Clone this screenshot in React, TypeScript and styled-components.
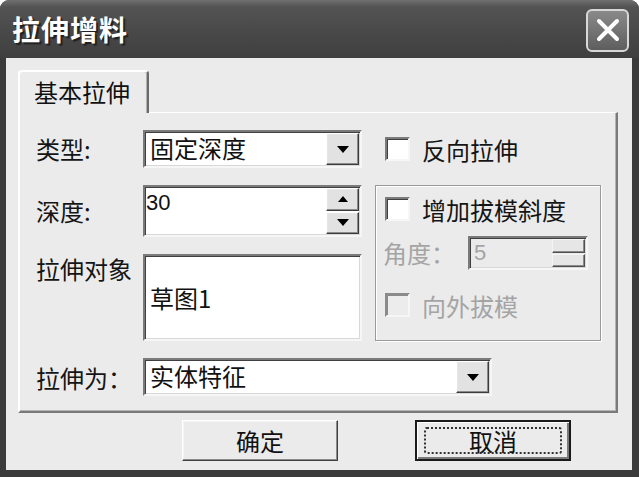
import React from 'react'
import styled, { createGlobalStyle, css } from 'styled-components'

const GlobalStyle = createGlobalStyle`
  html, body {
    margin: 0;
    padding: 0;
    width: 639px;
    height: 477px;
    overflow: hidden;
    background: #ffffff;
  }
  * {
    box-sizing: border-box;
  }
  body {
    font-family: "Noto Sans CJK SC", "Liberation Sans", sans-serif;
  }
`

const sunken = css`
  border: 2px solid;
  border-color: #7a7a7a #f6f6f6 #f6f6f6 #7a7a7a;
  box-shadow: inset 1px 1px 0 #404040, inset -1px -1px 0 #d8d8d8;
`

const raised = css`
  border: 1px solid;
  border-color: #ffffff #3c3c3c #3c3c3c #ffffff;
  box-shadow: inset -1px -1px 0 #8a8a8a, inset 1px 1px 0 #e6e6e6;
  background: #e2e2e2;
`

const Window = styled.div`
  width: 639px;
  height: 477px;
  display: flex;
  flex-direction: column;
  background: #3b3b3b;
  border-radius: 9px 9px 0 0;
  overflow: hidden;
`

const TitleBar = styled.div`
  height: 58px;
  flex-shrink: 0;
  display: flex;
  align-items: center;
  justify-content: space-between;
  padding: 0 10px 0 12px;
  background: linear-gradient(#707070 0%, #535353 12%, #4a4a4a 50%, #3f3f3f 100%);
`

const Title = styled.div`
  color: #ffffff;
  font-size: 28px;
  font-weight: 700;
  letter-spacing: 1px;
  text-shadow: 2px 2px 1px #202020;
`

const CloseButton = styled.div`
  width: 43px;
  height: 43px;
  margin-top: 2px;
  border: 2px solid #d8d8d8;
  border-radius: 6px;
  background: linear-gradient(#8a8a8a, #5e5e5e);
  display: flex;
  align-items: center;
  justify-content: center;
`

const Client = styled.div`
  flex: 1;
  margin: 0 7px 7px 6px;
  background: #ebebeb;
  padding: 12px 14px 0 12px;
  display: flex;
  flex-direction: column;
`

const TabStrip = styled.div`
  height: 42px;
  display: flex;
  align-items: flex-end;
  position: relative;
  z-index: 1;
`

const Tab = styled.div`
  width: 131px;
  height: 43px;
  margin-bottom: -1px;
  background: #ebebeb;
  border-top: 2px solid #ffffff;
  border-left: 2px solid #ffffff;
  border-right: 2px solid #6a6a6a;
  border-radius: 4px 4px 0 0;
  box-shadow: inset -1px 0 0 #b0b0b0;
  font-size: 24px;
  color: #111;
  padding: 4px 0 0 14px;
  line-height: 32px;
`

const Panel = styled.div`
  height: 301px;
  border-top: 1px solid #ffffff;
  border-left: 2px solid #ffffff;
  border-right: 2px solid #7a7a7a;
  border-bottom: 2px solid #7a7a7a;
  box-shadow: inset -1px -1px 0 #b4b4b4;
  padding: 17px 0 0 16px;
  display: grid;
  grid-template-columns: 107px 219px 13px 226px;
  grid-template-rows: 38px 52px 87px 39px;
  row-gap: 17px;
`

const Cell = styled.div<{ $row: number; $col: string }>`
  grid-row: ${({ $row }) => $row};
  grid-column: ${({ $col }) => $col};
  display: flex;
  min-width: 0;
`

const Label = styled.div<{ $row?: number; $top?: boolean; $disabled?: boolean }>`
  grid-column: 1;
  grid-row: ${({ $row }) => $row ?? 'auto'};
  font-size: 24px;
  color: ${({ $disabled }) => ($disabled ? '#a4a4a4' : '#151515')};
  align-self: ${({ $top }) => ($top ? 'start' : 'center')};
  margin-top: ${({ $top }) => ($top ? '-1px' : '0')};
  line-height: 32px;
  white-space: nowrap;
`

const Combo = styled.div<{ $width: number }>`
  ${sunken};
  width: ${({ $width }) => $width}px;
  height: 38px;
  background: #ffffff;
  display: flex;
  align-items: stretch;
  justify-content: space-between;
`

const ComboText = styled.div`
  font-size: 24px;
  line-height: 32px;
  padding-left: 5px;
  color: #111;
`

const ArrowButton = styled.div`
  ${raised};
  width: 33px;
  margin: 1px 1px 1px 0;
  display: flex;
  align-items: center;
  justify-content: center;
`

const SpinBox = styled.div<{ $width: number; $height: number; $disabled?: boolean }>`
  ${sunken};
  width: ${({ $width }) => $width}px;
  height: ${({ $height }) => $height}px;
  background: ${({ $disabled }) => ($disabled ? '#ebebeb' : '#ffffff')};
  display: flex;
  justify-content: space-between;
`

const SpinText = styled.div<{ $disabled?: boolean }>`
  font-family: "Liberation Sans", "Noto Sans CJK SC", sans-serif;
  font-size: 22px;
  line-height: 26px;
  padding: ${({ $disabled }) => ($disabled ? '2px 0 0 4px' : '3px 0 0 1px')};
  color: ${({ $disabled }) => ($disabled ? '#a4a4a4' : '#111')};
`

const SpinButtons = styled.div`
  width: 33px;
  display: flex;
  flex-direction: column;
  gap: 1px;
  margin: 1px 1px 1px 0;
`

const SpinButton = styled.div<{ $flat?: boolean }>`
  ${raised};
  flex: 1;
  display: flex;
  align-items: center;
  justify-content: center;
  ${({ $flat }) =>
    $flat &&
    css`
      border-color: #f4f4f4 #505050 #505050 #f4f4f4;
      background: #e6e6e6;
    `}
`

const TextBox = styled.div`
  ${sunken};
  flex: 1;
  background: #ffffff;
  display: flex;
  align-items: center;
  padding-left: 5px;
  font-size: 24px;
  color: #111;
`

const CheckRow = styled.div<{ $disabled?: boolean; $top?: number }>`
  display: flex;
  align-items: center;
  gap: 12px;
  height: 26px;
  margin-top: ${({ $top }) => $top ?? 0}px;
  font-size: 24px;
  color: ${({ $disabled }) => ($disabled ? '#a4a4a4' : '#151515')};
  white-space: nowrap;
`

const CheckBox = styled.div<{ $disabled?: boolean }>`
  width: 25px;
  height: 24px;
  flex-shrink: 0;
  border: 2px solid;
  border-color: #7a7a7a #f6f6f6 #f6f6f6 #7a7a7a;
  box-shadow: inset 1px 1px 0 #404040;
  background: ${({ $disabled }) => ($disabled ? '#ececec' : '#ffffff')};
  ${({ $disabled }) =>
    $disabled &&
    css`
      border-color: #8a8a8a #f6f6f6 #f6f6f6 #8a8a8a;
      box-shadow: inset 1px 1px 0 #8a8a8a;
    `}
`

const GroupBox = styled.div`
  grid-column: 4;
  grid-row: 2 / 4;
  border: 1px solid #9a9a9a;
  box-shadow: inset 1px 1px 0 #ffffff, 1px 1px 0 #ffffff;
  padding: 10px 0 0 9px;
  display: flex;
  flex-direction: column;
`

const AngleRow = styled.div`
  display: flex;
  align-items: center;
  margin-top: 14px;
  margin-left: -2px;
`

const AngleLabel = styled.div`
  width: 85px;
  font-size: 24px;
  line-height: 32px;
  color: #a4a4a4;
  white-space: nowrap;
`

const ButtonRow = styled.div`
  display: flex;
  gap: 77px;
  padding: 7px 0 0 164px;
`

const PushButton = styled.div<{ $default?: boolean }>`
  width: 156px;
  height: 41px;
  display: flex;
  align-items: center;
  justify-content: center;
  font-size: 24px;
  color: #111;
  background: #ebebeb;
  border: 1px solid;
  border-color: #ffffff #404040 #404040 #ffffff;
  box-shadow: inset -1px -1px 0 #8a8a8a, inset 1px 1px 0 #f4f4f4;
  ${({ $default }) =>
    $default &&
    css`
      border: 2px solid #1a1a1a;
      box-shadow: inset 1px 1px 0 #ffffff, inset -2px -2px 0 #7a7a7a;
    `}
`

const FocusRing = styled.div`
  width: 138px;
  height: 27px;
  border: 2px dotted #333;
  border-radius: 3px;
  display: flex;
  align-items: center;
  justify-content: center;
`

const DownArrow = () => (
  <svg width="12" height="7" viewBox="0 0 12 7">
    <polygon points="0,0 12,0 6,7" fill="#000" />
  </svg>
)

const UpArrow = () => (
  <svg width="10" height="6" viewBox="0 0 10 6">
    <polygon points="0,6 10,6 5,0" fill="#000" />
  </svg>
)

const CloseIcon = () => (
  <svg width="26" height="26" viewBox="0 0 26 26">
    <path d="M4 4 L22 22 M22 4 L4 22" stroke="#ffffff" strokeWidth="4" strokeLinecap="round" />
  </svg>
)

export default function App() {
  return (
    <>
      <GlobalStyle />
      <Window>
        <TitleBar>
          <Title>拉伸增料</Title>
          <CloseButton>
            <CloseIcon />
          </CloseButton>
        </TitleBar>
        <Client>
          <TabStrip>
            <Tab>基本拉伸</Tab>
          </TabStrip>
          <Panel>
            <Label $row={1}>类型:</Label>
            <Cell $row={1} $col="2">
              <Combo $width={219}>
                <ComboText>固定深度</ComboText>
                <ArrowButton>
                  <DownArrow />
                </ArrowButton>
              </Combo>
            </Cell>
            <Cell $row={1} $col="4" style={{ alignItems: 'center', paddingLeft: 10 }}>
              <CheckRow>
                <CheckBox />
                反向拉伸
              </CheckRow>
            </Cell>

            <Label $row={2}>深度:</Label>
            <Cell $row={2} $col="2">
              <SpinBox $width={219} $height={52}>
                <SpinText>30</SpinText>
                <SpinButtons>
                  <SpinButton>
                    <UpArrow />
                  </SpinButton>
                  <SpinButton>
                    <DownArrow />
                  </SpinButton>
                </SpinButtons>
              </SpinBox>
            </Cell>
            <GroupBox>
              <CheckRow>
                <CheckBox />
                增加拔模斜度
              </CheckRow>
              <AngleRow>
                <AngleLabel>角度：</AngleLabel>
                <SpinBox $width={120} $height={34} $disabled>
                  <SpinText $disabled>5</SpinText>
                  <SpinButtons>
                    <SpinButton $flat />
                    <SpinButton $flat />
                  </SpinButtons>
                </SpinBox>
              </AngleRow>
              <CheckRow $disabled $top={22}>
                <CheckBox $disabled />
                向外拔模
              </CheckRow>
            </GroupBox>

            <Label $row={3} $top>拉伸对象</Label>
            <Cell $row={3} $col="2">
              <TextBox>草图1</TextBox>
            </Cell>

            <Label $row={4}>拉伸为：</Label>
            <Cell $row={4} $col="2 / 5">
              <Combo $width={349}>
                <ComboText>实体特征</ComboText>
                <ArrowButton>
                  <DownArrow />
                </ArrowButton>
              </Combo>
            </Cell>
          </Panel>
          <ButtonRow>
            <PushButton>确定</PushButton>
            <PushButton $default>
              <FocusRing>取消</FocusRing>
            </PushButton>
          </ButtonRow>
        </Client>
      </Window>
    </>
  )
}
